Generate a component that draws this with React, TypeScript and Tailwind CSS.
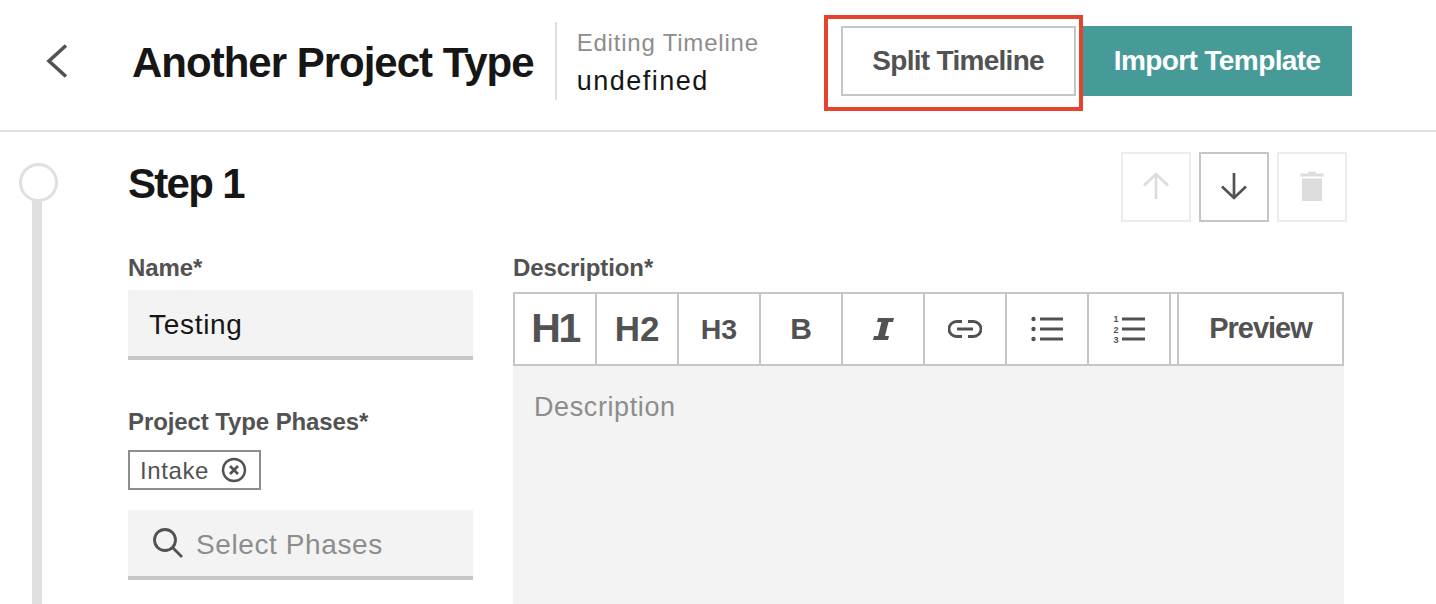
function ToolCell({ children, className = "" }: { children: React.ReactNode; className?: string }) {
  return (
    <div className={`w-[82px] h-full flex items-center justify-center border-r-2 border-[#c6c6c6] font-bold text-[#525252] ${className}`}>
      {children}
    </div>
  );
}

function IconButton({ children, disabled }: { children: React.ReactNode; disabled?: boolean }) {
  return (
    <button className={`w-[70px] h-[70px] flex items-center justify-center border-2 ${disabled ? "border-[#ececec]" : "border-[#c6c6c6]"}`}>
      {children}
    </button>
  );
}

function Arrow({ up, color }: { up?: boolean; color: string }) {
  return (
    <svg className="mb-[2px]" width="30" height="30" viewBox="0 0 30 30" fill="none" stroke={color} strokeWidth="2.7">
      {up ? <path d="M15 28V3M3 14.500 15 3l12 11.500" /> : <path d="M15 2v25M3 15.500 15 27l12-11.500" />}
    </svg>
  );
}

export default function App() {
  return (
    <div className="relative w-[1436px] h-[604px] overflow-hidden bg-white font-['Liberation_Sans',Arial,sans-serif]">
      <header className="flex items-center h-[132px] pb-[8px] border-b-2 border-[#e0e0e0]">
        <svg className="ml-[46px] shrink-0" width="22" height="34" viewBox="0 0 22 34" fill="none" stroke="#525252" strokeWidth="3.6">
          <path d="M20 1.500 3 17l17 15.500" />
        </svg>
        <h1 className="ml-[64px] mt-[4px] text-[42px] leading-none font-bold text-[#161616] tracking-[-1px] whitespace-nowrap">Another Project Type</h1>
        <div className="ml-[21px] h-[78px] w-[2px] bg-[#e0e0e0]" />
        <div className="ml-[20px] w-[264px] mt-[4px]">
          <div className="text-[24px] leading-[28px] text-[#8d8d8d] tracking-[0.8px]">Editing Timeline</div>
          <div className="mt-[8px] text-[27px] leading-[32px] text-[#161616] tracking-[1.5px]">undefined</div>
        </div>
        <button className="w-[235px] h-[70px] border-2 border-[#c6c6c6] text-[28px] font-bold text-[#525252] tracking-[-0.7px]">Split Timeline</button>
        <button className="ml-[7px] w-[269px] h-[70px] bg-[#469b99] text-[28px] font-bold text-white tracking-[-0.6px]">Import Template</button>
      </header>

      <div className="absolute left-[824px] top-[15px] w-[259px] h-[96px] border-[4px] border-[#e3442b]" />

      <main className="flex">
        {/* timeline rail */}
        <div className="w-[128px] shrink-0 pl-[19px] pt-[31px] flex flex-col">
          <div className="w-[39px] h-[39px] rounded-full border-[3px] border-[#e0e0e0]" />
          <div className="ml-[13px] w-[10px] h-[420px] -mt-[2px] bg-[#e0e0e0]" />
        </div>

        <div className="flex-1 min-w-0">
          <div className="flex items-start justify-between w-[1219px] pt-[20px]">
            <h2 className="mt-[10px] text-[42px] leading-[44px] font-bold text-[#161616] tracking-[-1.7px]">Step 1</h2>
            <div className="flex gap-[8px]">
              <IconButton disabled><Arrow up color="#dcdcdc" /></IconButton>
              <IconButton><Arrow color="#525252" /></IconButton>
              <IconButton disabled>
                <svg className="mb-[2px]" width="24" height="30" viewBox="0 0 24 30" fill="#dcdcdc">
                  <path d="M0.500 2.500h7L9 0.500h6l1.500 2h7V5.500H0.500zM2 7.500h20V30H2z" />
                </svg>
              </IconButton>
            </div>
          </div>

          <div className="flex mt-[32px]">
            <div className="w-[345px] shrink-0">
              <label className="block text-[24px] leading-[28px] font-bold text-[#525252] tracking-[-0.1px]">Name*</label>
              <div className="mt-[8px] h-[70px] bg-[#f3f3f3] border-b-[4px] border-[#c6c6c6] pl-[21px] pt-[4px] flex items-center text-[28px] text-[#161616] tracking-[0.7px]">Testing</div>

              <label className="block mt-[48px] text-[24px] leading-[28px] font-bold text-[#525252] tracking-[-0.1px]">Project Type Phases*</label>
              <div className="mt-[14px] w-[133px] h-[40px] border-2 border-[#8d8d8d] pl-[10px] flex items-center text-[24px] text-[#525252] tracking-[0.6px]">
                <span className="mt-[2px]">Intake</span>
                <svg className="ml-[12px]" width="26" height="26" viewBox="0 0 26 26" fill="none" stroke="#525252">
                  <circle cx="13" cy="13" r="11" strokeWidth="2.400" />
                  <path d="m9 9 8 8M17 9l-8 8" strokeWidth="2.600" />
                </svg>
              </div>

              <div className="mt-[20px] h-[70px] bg-[#f3f3f3] border-b-[4px] border-[#c6c6c6] pl-[24px] pt-[4px] flex items-center text-[28px] text-[#8d8d8d] tracking-[0.6px]">
                <svg className="-mt-[4px]" width="32" height="32" viewBox="0 0 32 32" fill="none" stroke="#525252" strokeWidth="2.800">
                  <circle cx="13" cy="13" r="10.500" />
                  <path d="m20.500 20.500 9.500 9.500" />
                </svg>
                <span className="ml-[12px]">Select Phases</span>
              </div>
            </div>

            <div className="ml-[40px] w-[831px] shrink-0">
              <label className="block text-[24px] leading-[28px] font-bold text-[#525252] tracking-[-0.1px]">Description*</label>
              <div className="mt-[10px] h-[74px] flex border-2 border-[#c6c6c6]">
                <ToolCell className="text-[41px] tracking-[-2.500px]">H1</ToolCell>
                <ToolCell className="text-[35px]">H2</ToolCell>
                <ToolCell className="text-[28.500px]">H3</ToolCell>
                <ToolCell className="text-[30px]"><span className="mb-[2px]">B</span></ToolCell>
                <ToolCell>
                  <svg width="22" height="24" viewBox="0 0 22 24" fill="#525252">
                    <path d="M6 1h16l-1 4h-4.500l-3.500 14h4l-1 4H1l1-4h4l3.500-14H5z" />
                  </svg>
                </ToolCell>
                <ToolCell>
                  <svg width="34" height="18" viewBox="0 0 34 18" fill="none" stroke="#525252" strokeWidth="2.800">
                    <path d="M14 1.500H8.500a7.500 7.500 0 0 0 0 15H14M20 1.500h5.500a7.500 7.500 0 0 1 0 15H20M9 9h16" />
                  </svg>
                </ToolCell>
                <ToolCell>
                  <svg width="32" height="26" viewBox="0 0 32 26" fill="#525252">
                    <circle cx="2.500" cy="3" r="2.200" /><circle cx="2.500" cy="13" r="2.200" /><circle cx="2.500" cy="23" r="2.200" />
                    <path d="M9 1.600h23v2.800H9zM9 11.600h23v2.800H9zM9 21.600h23v2.800H9z" />
                  </svg>
                </ToolCell>
                <ToolCell>
                  <svg width="32" height="30" viewBox="0 0 32 30" fill="#525252">
                    <path d="M9 3.600h23v2.800H9zM9 13.600h23v2.800H9zM9 23.600h23v2.800H9z" />
                    <text x="3" y="8" fontSize="9" fontWeight="700" textAnchor="middle">1</text>
                    <text x="3" y="18.500" fontSize="9" fontWeight="700" textAnchor="middle">2</text>
                    <text x="3" y="28.500" fontSize="9" fontWeight="700" textAnchor="middle">3</text>
                  </svg>
                </ToolCell>
                <div className="w-[8px] h-full border-r-2 border-[#c6c6c6]" />
                <div className="flex-1 flex items-center justify-center text-[29px] font-bold text-[#525252] tracking-[-1px]">Preview</div>
              </div>
              <div className="h-[300px] bg-[#f3f3f3] pl-[21px] pt-[25px] text-[27px] leading-[32px] text-[#8d8d8d] tracking-[0.6px]">Description</div>
            </div>
          </div>
        </div>
      </main>
    </div>
  );
}
